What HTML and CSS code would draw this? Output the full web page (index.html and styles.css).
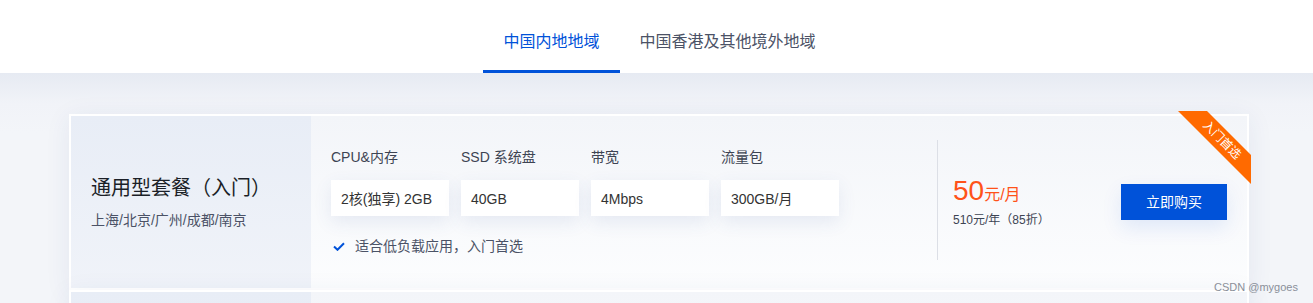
FILE: index.html
```html
<!DOCTYPE html>
<html lang="zh-CN">
<head>
    <meta charset="UTF-8">
    <meta name="viewport" content="width=device-width, initial-scale=1.0">
    <title>轻量应用服务器套餐</title>
    <link rel="stylesheet" href="styles.css">
</head>
<body>
    <div class="header">
        <div class="tabs">
            <div class="tab active">中国内地地域</div>
            <div class="tab">中国香港及其他境外地域</div>
        </div>
    </div>

    <div class="main">
        <div class="card">
            <div class="ribbon"><span>入门首选</span></div>
            <div class="card-left">
                <div class="plan-title">通用型套餐（入门）</div>
                <div class="plan-region">上海/北京/广州/成都/南京</div>
            </div>
            <div class="card-spec">
                <div class="spec-row">
                    <div class="spec">
                        <div class="spec-label">CPU&amp;内存</div>
                        <div class="spec-box">2核(独享) 2GB</div>
                    </div>
                    <div class="spec">
                        <div class="spec-label">SSD 系统盘</div>
                        <div class="spec-box">40GB</div>
                    </div>
                    <div class="spec">
                        <div class="spec-label">带宽</div>
                        <div class="spec-box">4Mbps</div>
                    </div>
                    <div class="spec">
                        <div class="spec-label">流量包</div>
                        <div class="spec-box">300GB/月</div>
                    </div>
                </div>
                <div class="spec-note">
                    <svg class="check" width="12" height="9" viewBox="0 0 12 9"><polyline points="1,4.5 4.5,7.8 11,1.2" fill="none" stroke="#0052d9" stroke-width="2"/></svg>
                    适合低负载应用，入门首选
                </div>
            </div>
            <div class="divider"></div>
            <div class="card-price">
                <div class="price"><span class="price-num">50</span><span class="price-unit">元/月</span></div>
                <div class="price-year">510元/年（85折）</div>
            </div>
            <div class="card-action">
                <a href="#" class="buy-button">立即购买</a>
            </div>
        </div>

        <!-- next plan, only its top edge is in view -->
        <div class="card">
            <div class="card-left"></div>
        </div>
    </div>

    <div class="watermark">CSDN @mygoes</div>
</body>
</html>
```

FILE: styles.css
```css
body {
    margin: 0;
    font-family: "Liberation Sans", "Noto Sans CJK SC", sans-serif;
    background-color: #f3f5f9;
    color: #333;
    overflow: hidden;
}
.header {
    height: 73px;
    background-color: #fff;
}
.tabs {
    display: flex;
    justify-content: center;
    padding-left: 6px;
}
.tab {
    padding: 32px 20px 18px;
    font-size: 16px;
    line-height: 20px;
    color: #4b5266;
    border-bottom: 3px solid transparent;
}
.tab.active {
    color: #0052d9;
    border-bottom-color: #0052d9;
}
.main {
    padding: 41px 0 0 69px;
    background: linear-gradient(180deg, #e6eaf2 0, #f1f3f8 30px, #f3f5f9 60px);
}
.card {
    position: relative;
    display: flex;
    width: 1176px;
    height: 172px;
    border: 2px solid #fff;
    background: linear-gradient(180deg, #f3f5f9, #fcfdfe);
    box-shadow: 0 4px 24px rgba(40, 70, 130, 0.08);
}
.card-left {
    width: 240px;
    display: flex;
    flex-direction: column;
    justify-content: center;
    padding-left: 20px;
    box-sizing: border-box;
    background: linear-gradient(180deg, #e8edf6, #f0f3f9);
}
.plan-title {
    font-size: 20px;
    line-height: 28px;
    color: #1b1f27;
    margin-bottom: 8px;
}
.plan-region {
    font-size: 14px;
    line-height: 20px;
    color: #4b5266;
}
.card-spec {
    width: 626px;
    padding: 31px 0 0 20px;
    box-sizing: border-box;
}
.spec-row {
    display: flex;
    gap: 12px;
}
.spec {
    width: 118px;
}
.spec-label {
    font-size: 14px;
    line-height: 20px;
    color: #3d4453;
    margin-bottom: 13px;
}
.spec-box {
    height: 33px;
    line-height: 33px;
    padding: 3px 0 0 10px;
    font-size: 14px;
    color: #333;
    background-color: #fff;
    box-shadow: 0 6px 18px rgba(55, 90, 160, 0.1);
}
.spec-note {
    display: flex;
    align-items: center;
    margin-top: 20px;
    font-size: 14px;
    line-height: 20px;
    color: #4b5266;
}
.check {
    margin: 0 10px 0 2px;
}
.divider {
    width: 1px;
    margin: 24px 0 28px;
    background-color: #dcdfe6;
}
.card-price {
    flex: 1;
    display: flex;
    flex-direction: column;
    justify-content: center;
    padding-left: 15px;
}
.price {
    line-height: 32px;
    color: #ff5219;
}
.price-num {
    font-size: 28px;
}
.price-unit {
    font-size: 16px;
}
.price-year {
    font-size: 12px;
    line-height: 18px;
    color: #3d4453;
}
.card-action {
    display: flex;
    align-items: center;
    padding-right: 20px;
}
.buy-button {
    display: block;
    width: 106px;
    height: 36px;
    line-height: 36px;
    text-align: center;
    font-size: 14px;
    color: #fff;
    background-color: #0052d9;
    text-decoration: none;
    box-shadow: 0 8px 20px rgba(0, 82, 217, 0.1);
}
.ribbon {
    position: absolute;
    top: -5px;
    right: -4px;
    width: 73px;
    height: 73px;
    background-color: #ff6a00;
    clip-path: polygon(0 0, 29px 0, 100% 44px, 100% 100%);
}
.ribbon span {
    position: absolute;
    left: 20px;
    top: 21px;
    width: 48px;
    font-size: 12px;
    line-height: 16px;
    color: #fff;
    text-align: center;
    transform: rotate(45deg);
}
.watermark {
    position: absolute;
    left: 1214px;
    top: 279px;
    font-size: 11px;
    line-height: 16px;
    color: #8a8f99;
}
```
